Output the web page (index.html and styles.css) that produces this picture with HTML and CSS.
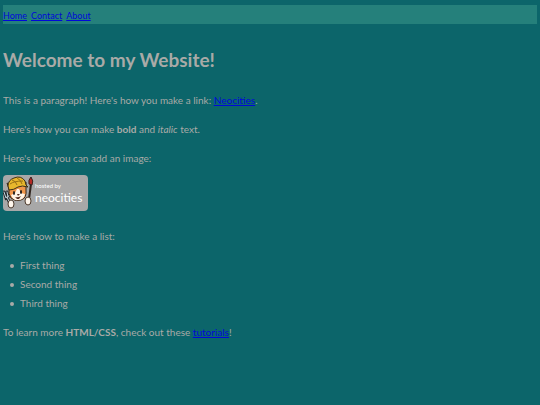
FILE: index.html
```
<!DOCTYPE html>
<html lang="en">
<head>
  <meta charset="UTF-8">
  <meta name="viewport" content="width=device-width, initial-scale=1.0">
  <title>My Website</title>
  <link rel="stylesheet" href="styles.css">
</head>
<body>
  <nav class="navbar">
    <a href="index.html">Home</a>
    <a href="contact.html">Contact</a>
    <a href="about.html">About</a>
  </nav>

  <h1>Welcome to my Website!</h1>

  <p>This is a paragraph! Here's how you make a link: <a href="https://neocities.org">Neocities</a>.</p>

  <p>Here's how you can make <strong>bold</strong> and <em>italic</em> text.</p>

  <p>Here's how you can add an image:</p>

  <div class="badge">
    <svg class="cat" viewBox="0 0 32 36" aria-hidden="true">
      <!-- fork -->
      <path d="M1 17l2 6 4-3M4 17l1 5M4 22l4 9" fill="none" stroke="#252c30" stroke-width="3" stroke-linecap="round"/>
      <path d="M1 17l2 6 4-3M4 17l1 5M4 22l4 9" fill="none" stroke="#c5d5dc" stroke-width="1" stroke-linecap="round"/>
      <!-- brush -->
      <path d="M28 9l-2 15" stroke="#30251f" stroke-width="2"/>
      <path d="M26 9q-1-4 2-7 3 4 1 8z" fill="#b52924" stroke="#382320" stroke-width="1"/>
      <!-- head -->
      <path d="M6 14L4 8l6 3 9-1 4-3v8q1 8-5 10-6 2-10-2-3-4-2-9z" fill="#f0964a" stroke="#33261c" stroke-width="1"/>
      <path d="M14 14l-2 4-4 2q2 6 7 5 6 0 7-6l-4-1-2-4z" fill="#fff4e6"/>
      <path d="M5 11q0-6 6-8 7-3 11 3l1 4 2 2q-6-2-10 0-4 3-9 3z" fill="#e8b72c" stroke="#3b3018" stroke-width="1"/>
      <path d="M9 5q4 1 5 5M14 3q4 2 5 6M7 9q4-3 13-3" fill="none" stroke="#977016" stroke-width="1"/>
      <ellipse cx="11" cy="18" rx="1" ry="2" fill="#1d1c1b"/>
      <ellipse cx="18" cy="17" rx="1" ry="2" fill="#1d1c1b"/>
      <path d="M14 19h3l-2 2zM12 22q3 1 6-1l-2 3h-2z" fill="#552c20"/>
      <!-- paws -->
      <ellipse cx="8" cy="29" rx="3" ry="4" fill="#fff7ed" stroke="#4b392b" stroke-width="1"/>
      <ellipse cx="25" cy="26" rx="3" ry="4" fill="#fff7ed" stroke="#4b392b" stroke-width="1"/>
    </svg>
    <div class="badge-text">
      <span class="hosted">hosted by</span>
      <span class="brand">neocities</span>
    </div>
  </div>

  <p>Here's how to make a list:</p>

  <ul>
    <li>First thing</li>
    <li>Second thing</li>
    <li>Third thing</li>
  </ul>

  <p>To learn more <strong>HTML/CSS</strong>, check out these <a href="https://neocities.org/tutorials">tutorials</a>!</p>
</body>
</html>
```
FILE: styles.css
```
body {
  margin: 5px 3px;
  background-color: #0c656a;
  color: #a9aaa7;
  font-family: "Lato", sans-serif;
  font-size: 10px;
  line-height: 19px;
}

a {
  color: #0008d8;
}

.navbar {
  display: flex;
  gap: 4px;
  padding-top: 2px;
  background-color: #25807b;
  font-size: 9px;
  line-height: 17px;
}

h1 {
  margin: 17px 0 12px;
  font-size: 19px;
  line-height: 38px;
}

p {
  margin: 10px 0;
}

.badge {
  display: flex;
  width: fit-content;
  height: 36px;
  margin: -3px 0 16px;
  padding-right: 6px;
  border-radius: 4px;
  background-color: #a8a8a8;
}

.cat {
  width: 32px;
  height: 36px;
}

.badge-text {
  display: flex;
  flex-direction: column;
  padding-top: 6px;
  color: #fff;
}

.hosted {
  font-size: 6px;
  line-height: 10px;
}

.brand {
  font-size: 12px;
  line-height: 14px;
}

ul {
  margin: 10px 0;
  padding: 0;
  list-style: none;
}

li {
  display: flex;
  align-items: center;
  gap: 6px;
  padding-left: 7px;
}

li::before {
  content: "";
  width: 4px;
  height: 4px;
  border-radius: 50%;
  background-color: #a9aaa7;
}
```
